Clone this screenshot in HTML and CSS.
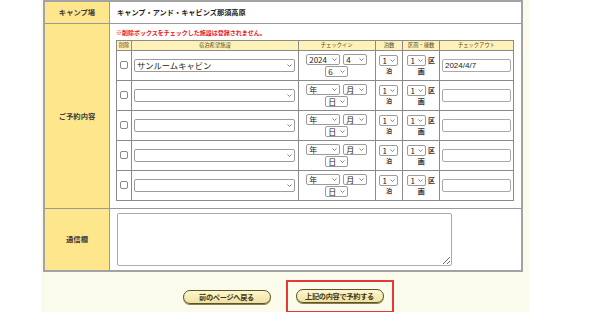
FILE: index.html
```html
<!DOCTYPE html>
<html lang="ja">
<head>
    <meta charset="UTF-8">
    <title>ご予約内容の入力</title>
    <link rel="stylesheet" href="styles.css">
</head>
<body>
    <div class="page">
        <table class="form-table">
            <tr class="row-camp">
                <th>キャンプ場</th>
                <td class="camp-name">キャンプ・アンド・キャビンズ那須高原</td>
            </tr>
            <tr class="row-booking">
                <th>ご予約内容</th>
                <td class="booking">
                    <p class="note">※削除ボックスをチェックした施設は登録されません。</p>
                    <table class="rooms">
                        <tr>
                            <th class="c-del">削除</th>
                            <th class="c-site">宿泊希望施設</th>
                            <th class="c-in">チェックイン</th>
                            <th class="c-nights">泊数</th>
                            <th class="c-units">区画・棟数</th>
                            <th class="c-out">チェックアウト</th>
                        </tr>
                        <tr>
                            <td><input type="checkbox" class="chk"></td>
                            <td><select class="sel-site"><option>サンルームキャビン</option></select></td>
                            <td>
                                <div class="date-line">
                                    <select class="sel-year"><option>2024</option></select>
                                    <select class="sel-month"><option>4</option></select>
                                </div>
                                <div class="date-line">
                                    <select class="sel-day"><option>6</option></select>
                                </div>
                            </td>
                            <td><select class="sel-num"><option>1</option></select><div class="unit">泊</div></td>
                            <td class="units"><select class="sel-num"><option>1</option></select> 区画</td>
                            <td><input type="text" class="out" value="2024/4/7"></td>
                        </tr>
                        <tr>
                            <td><input type="checkbox" class="chk"></td>
                            <td><select class="sel-site"><option></option></select></td>
                            <td>
                                <div class="date-line">
                                    <select class="sel-year"><option>年</option></select>
                                    <select class="sel-month"><option>月</option></select>
                                </div>
                                <div class="date-line">
                                    <select class="sel-day"><option>日</option></select>
                                </div>
                            </td>
                            <td><select class="sel-num"><option>1</option></select><div class="unit">泊</div></td>
                            <td class="units"><select class="sel-num"><option>1</option></select> 区画</td>
                            <td><input type="text" class="out"></td>
                        </tr>
                        <tr>
                            <td><input type="checkbox" class="chk"></td>
                            <td><select class="sel-site"><option></option></select></td>
                            <td>
                                <div class="date-line">
                                    <select class="sel-year"><option>年</option></select>
                                    <select class="sel-month"><option>月</option></select>
                                </div>
                                <div class="date-line">
                                    <select class="sel-day"><option>日</option></select>
                                </div>
                            </td>
                            <td><select class="sel-num"><option>1</option></select><div class="unit">泊</div></td>
                            <td class="units"><select class="sel-num"><option>1</option></select> 区画</td>
                            <td><input type="text" class="out"></td>
                        </tr>
                        <tr>
                            <td><input type="checkbox" class="chk"></td>
                            <td><select class="sel-site"><option></option></select></td>
                            <td>
                                <div class="date-line">
                                    <select class="sel-year"><option>年</option></select>
                                    <select class="sel-month"><option>月</option></select>
                                </div>
                                <div class="date-line">
                                    <select class="sel-day"><option>日</option></select>
                                </div>
                            </td>
                            <td><select class="sel-num"><option>1</option></select><div class="unit">泊</div></td>
                            <td class="units"><select class="sel-num"><option>1</option></select> 区画</td>
                            <td><input type="text" class="out"></td>
                        </tr>
                        <tr>
                            <td><input type="checkbox" class="chk"></td>
                            <td><select class="sel-site"><option></option></select></td>
                            <td>
                                <div class="date-line">
                                    <select class="sel-year"><option>年</option></select>
                                    <select class="sel-month"><option>月</option></select>
                                </div>
                                <div class="date-line">
                                    <select class="sel-day"><option>日</option></select>
                                </div>
                            </td>
                            <td><select class="sel-num"><option>1</option></select><div class="unit">泊</div></td>
                            <td class="units"><select class="sel-num"><option>1</option></select> 区画</td>
                            <td><input type="text" class="out"></td>
                        </tr>
                    </table>
                </td>
            </tr>
            <tr class="row-message">
                <th>通信欄</th>
                <td class="message"><textarea></textarea></td>
            </tr>
        </table>

        <div class="actions">
            <button type="button" class="btn">前のページへ戻る</button>
            <span class="highlight">
                <button type="submit" class="btn">上記の内容で予約する</button>
            </span>
        </div>
    </div>
</body>
</html>
```

FILE: styles.css
```css
* {
    box-sizing: border-box;
}

body {
    margin: 0;
    background: #fff;
    font-family: "Noto Sans CJK JP", "Noto Sans", sans-serif;
    color: #333;
}

.page {
    width: 488px;
    height: 312px;
    margin-left: 41px;
    padding: 0 2px;
    background: #fbfbeb;
}

/* main form table */
.form-table {
    width: 480px;
    border-collapse: collapse;
    border: 2px solid #a3a3a3;
    background: #fff;
}

.form-table > tbody > tr > th {
    width: 66px;
    background: #fee68c;
    border-right: 1px solid #999;
    border-bottom: 1px solid #999;
    font-size: 7.3px;
    font-weight: bold;
    color: #3a3a3a;
    padding: 0;
}

.form-table > tbody > tr > td {
    border-bottom: 1px solid #999;
}

.row-camp { height: 22px; }
.row-booking { height: 185px; }
.row-message { height: 63px; }

.camp-name {
    padding: 0 7px;
    font-size: 7.2px;
    font-weight: bold;
    color: #222;
}

.booking {
    vertical-align: top;
    padding: 4px 7px 7px 6px;
}

.note {
    margin: 0 0 2px;
    font-size: 6px;
    line-height: 10px;
    font-weight: bold;
    color: #e8141c;
}

/* rooms table */
.rooms {
    width: 398px;
    border-collapse: collapse;
    border: 1px solid #8a8a8a;
}

.rooms th {
    height: 10px;
    padding: 0;
    background: #fff2b8;
    border: 1px solid #8a8a8a;
    font-size: 5.3px;
    line-height: 8px;
    font-weight: normal;
    color: #5a4a20;
}

.rooms td {
    height: 30px;
    padding: 0 2px;
    border: 1px solid #8a8a8a;
    text-align: center;
    line-height: 8px;
}

.c-del { width: 15px; }
.c-site { width: 167px; }
.c-in { width: 78px; }
.c-nights { width: 28px; }
.c-units { width: 37px; }
.c-out { width: 73px; }

.chk {
    appearance: none;
    display: block;
    width: 8px;
    height: 8px;
    margin: 0 auto;
    border: 1px solid #888;
    border-radius: 2px;
    background: #fff;
}

select {
    appearance: none;
    height: 11px;
    padding: 0 6px 0 2px;
    margin: 0;
    font-family: inherit;
    font-size: 8px;
    line-height: 9px;
    color: #222;
    text-align: left;
    border: 1px solid #9c9c9c;
    border-radius: 2px;
    background: #fff url("data:image/svg+xml,%3Csvg xmlns='http://www.w3.org/2000/svg' width='5' height='3' viewBox='0 0 5 3'%3E%3Cpath d='M0.5 0.5 L2.5 2.5 L4.5 0.5' fill='none' stroke='%23555' stroke-width='0.7'/%3E%3C/svg%3E") no-repeat right 2px center;
    vertical-align: top;
}

.sel-site {
    display: block;
    width: 161px;
    height: 13px;
    font-size: 8.3px;
    line-height: 11px;
}

.sel-year { width: 34px; }
.sel-month { width: 24px; }
.sel-day { width: 23px; }
.sel-num { width: 19px; }

.date-line {
    height: 11px;
    line-height: 11px;
    font-size: 0;
}

.date-line + .date-line {
    margin-top: 1px;
}

.date-line select + select {
    margin-left: 3px;
}

.unit {
    margin-top: 1px;
    font-size: 6px;
    font-weight: bold;
    line-height: 8px;
}

.units {
    font-size: 7px;
    font-weight: bold;
}

.rooms td.units {
    padding: 0 2px;
    line-height: 10px;
}

.out {
    display: block;
    width: 69px;
    height: 13px;
    padding: 0 2px;
    border: 1px solid #aaa;
    border-radius: 2px;
    font-family: "Liberation Sans", sans-serif;
    font-size: 8px;
    color: #222;
}

.message {
    padding: 0 7px;
}

.message textarea {
    display: block;
    width: 335px;
    height: 53px;
    border: 1px solid #aaa;
    border-radius: 2px;
}

/* buttons */
.actions {
    display: flex;
    justify-content: center;
    align-items: center;
    gap: 15px;
    padding: 8px 0 0 6px;
}

.btn {
    width: 88px;
    height: 14px;
    padding: 0;
    border: 1px solid #5d5428;
    border-radius: 8px;
    background: linear-gradient(#fdf7cf, #eee1a2);
    box-shadow: 0 1px 0 #8a7f4a;
    font-family: inherit;
    font-size: 7.2px;
    line-height: 12px;
    font-weight: bold;
    letter-spacing: -0.3px;
    color: #3f3715;
    cursor: pointer;
}

.highlight {
    display: inline-flex;
    padding: 7px 8px 8px 8px;
    border: 2px solid #e5383b;
}
```
